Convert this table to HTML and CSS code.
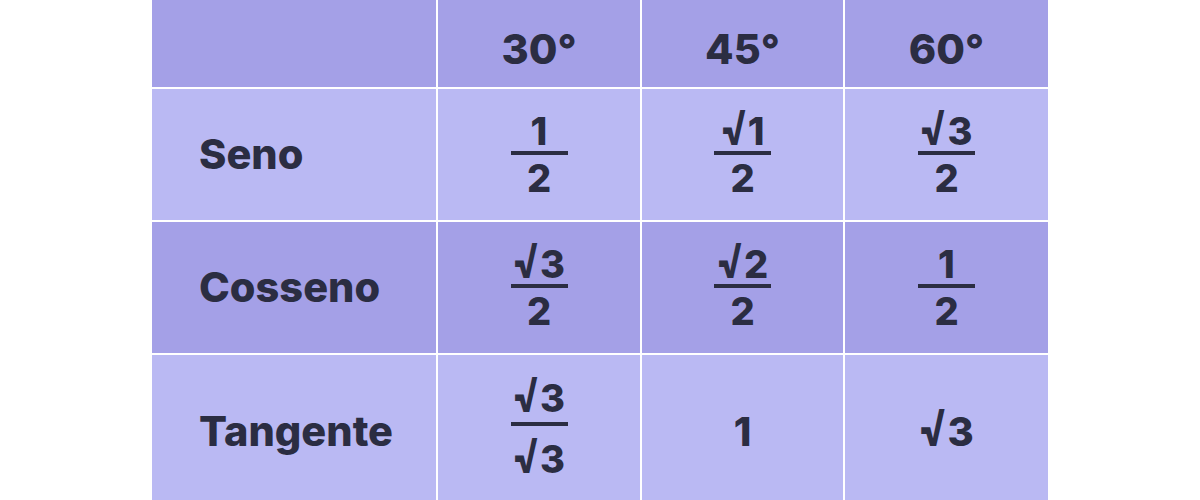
FILE: index.html
```html
<!DOCTYPE html>
<html lang="pt">
<head>
<meta charset="utf-8">
<link rel="stylesheet" href="styles.css">
</head>
<body>
<div class="table">
  <div class="cell head label"></div>
  <div class="cell head">30<span class="deg">°</span></div>
  <div class="cell head">45<span class="deg">°</span></div>
  <div class="cell head">60<span class="deg">°</span></div>

  <div class="cell light label">Seno</div>
  <div class="cell light"><span class="frac"><span class="num">1</span><span class="den">2</span></span></div>
  <div class="cell light"><span class="frac"><span class="num"><span class="rad">√</span>1</span><span class="den">2</span></span></div>
  <div class="cell light"><span class="frac"><span class="num"><span class="rad">√</span>3</span><span class="den">2</span></span></div>

  <div class="cell dark label">Cosseno</div>
  <div class="cell dark"><span class="frac"><span class="num"><span class="rad">√</span>3</span><span class="den">2</span></span></div>
  <div class="cell dark"><span class="frac"><span class="num"><span class="rad">√</span>2</span><span class="den">2</span></span></div>
  <div class="cell dark"><span class="frac"><span class="num">1</span><span class="den">2</span></span></div>

  <div class="cell light label last">Tangente</div>
  <div class="cell light last"><span class="frac tall"><span class="num"><span class="rad">√</span>3</span><span class="den"><span class="rad">√</span>3</span></span></div>
  <div class="cell light last"><span class="val">1</span></div>
  <div class="cell light last"><span class="val"><span class="rad">√</span>3</span></div>
</div>
</body>
</html>
```

FILE: styles.css
```css
html, body {
  margin: 0;
  padding: 0;
  background: #ffffff;
  overflow: hidden;
}

body {
  font-family: Inter, "Liberation Sans", sans-serif;
  font-weight: 800;
  color: #2b2d42;
}

.table {
  margin-left: 152px;
  width: 896px;
  display: grid;
  grid-template-columns: 284px 202px 201px 203px;
  grid-template-rows: 87px 131px 131px 150px;
  column-gap: 2px;
  row-gap: 2px;
  background: #ffffff;
}

.cell {
  display: flex;
  align-items: center;
  justify-content: center;
  font-size: 41.5px;
  line-height: 1;
}

.head {
  background: #a4a0e7;
  padding-top: 12px;
}

.dark {
  background: #a4a0e7;
}

.light {
  background: #bab9f3;
}

.label {
  justify-content: flex-start;
  padding-left: 47px;
}

.last {
  padding-top: 4px;
}

.frac {
  display: inline-flex;
  flex-direction: column;
  align-items: center;
  font-size: 38px;
  line-height: 1;
}

.num {
  display: block;
  padding-bottom: 1px;
}

.den {
  display: block;
  width: 57px;
  text-align: center;
  border-top: 4px solid #2b2d42;
  padding-top: 4px;
}

.frac.tall {
  margin-bottom: 8px;
}

.frac.tall .num {
  padding-bottom: 5px;
}

.frac.tall .den {
  padding-top: 14px;
}

.val {
  font-size: 40px;
}

.rad {
  display: inline-block;
  transform: scale(1.08, 1.28);
  transform-origin: 50% 86%;
  margin-right: 1px;
}
```
